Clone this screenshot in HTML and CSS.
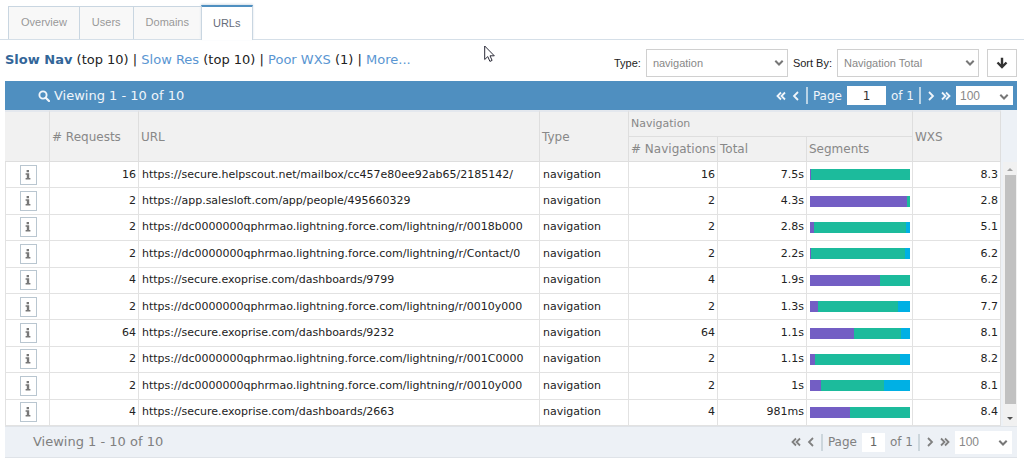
FILE: index.html
```html
<!DOCTYPE html>
<html lang="en">
<head>
<meta charset="utf-8">
<meta name="viewport" content="width=device-width, initial-scale=1">
<title>URLs</title>
<link rel="stylesheet" href="styles.css">
</head>
<body>
<svg class="sprite" aria-hidden="true">
  <symbol id="chevron-down" viewBox="0 0 10 8"><path d="M1.3 1.8 5 5.5l3.700-3.700" fill="none" stroke="currentColor" stroke-width="2"/></symbol>
  <symbol id="prev" viewBox="0 0 8 10"><path d="M6 1 2 5l4 4" fill="none" stroke="currentColor" stroke-width="1.800"/></symbol>
  <symbol id="next" viewBox="0 0 8 10"><path d="M2 1l4 4-4 4" fill="none" stroke="currentColor" stroke-width="1.800"/></symbol>
  <symbol id="first" viewBox="0 0 10 10"><path d="M5 1.500 1.500 5 5 8.500M9 1.500 5.500 5 9 8.500" fill="none" stroke="currentColor" stroke-width="1.800"/></symbol>
  <symbol id="last" viewBox="0 0 10 10"><path d="M1 1.500 4.500 5 1 8.500M5 1.500 8.500 5 5 8.500" fill="none" stroke="currentColor" stroke-width="1.800"/></symbol>
  <symbol id="info" viewBox="0 0 6 10"><path d="M1.600 0h2.400v2.200H1.600zM.6 3.200H4.200V7.900h1.200V9.500H.6V7.900h1.200V4.800H.6z" fill="currentColor"/></symbol>
</svg>

<nav class="tabs">
  <a class="tab" href="#overview">Overview</a>
  <a class="tab" href="#users">Users</a>
  <a class="tab" href="#domains">Domains</a>
  <a class="tab tab-active" href="#urls" aria-current="page">URLs</a>
</nav>

<main class="page">
  <div class="toolbar">
    <div class="views"><a class="current" href="#slow-nav">Slow Nav</a> (top 10) | <a href="#slow-res">Slow Res</a> (top 10) | <a href="#poor-wxs">Poor WXS</a> (1) | <a href="#more">More...</a></div>
    <div class="filters">
      <label for="type">Type:</label>
      <span class="picker"><select id="type"><option>navigation</option></select><svg class="caret"><use href="#chevron-down"/></svg></span>
      <label for="sort">Sort By:</label>
      <span class="picker"><select id="sort"><option>Navigation Total</option></select><svg class="caret"><use href="#chevron-down"/></svg></span>
      <button class="direction" type="button" aria-label="Sort descending"><svg viewBox="0 0 12 12" width="12" height="12"><path d="M6 .8v9.400M1.500 5.500 6 10l4.500-4.500" fill="none" stroke="#333" stroke-width="2.400"/></svg></button>
    </div>
  </div>

  <section class="grid">
    <div class="bar bar-top">
      <svg class="search" viewBox="0 0 12 12"><circle cx="5" cy="5" r="3.600" fill="none" stroke="currentColor" stroke-width="1.900"/><path d="M7.700 7.700 11 11" stroke="currentColor" stroke-width="2.200" stroke-linecap="round"/></svg>
      <span class="count">Viewing 1 - 10 of 10</span>
      <div class="pager">
        <button type="button" aria-label="First page"><svg><use href="#first"/></svg></button>
        <button type="button" aria-label="Previous page"><svg><use href="#prev"/></svg></button>
        <i class="rule"></i>
        <label for="page-top">Page</label>
        <input id="page-top" type="text" value="1">
        <span>of 1</span>
        <i class="rule"></i>
        <button type="button" aria-label="Next page"><svg><use href="#next"/></svg></button>
        <button type="button" aria-label="Last page"><svg><use href="#last"/></svg></button>
        <span class="picker size"><select aria-label="Rows per page"><option>100</option></select><svg class="caret"><use href="#chevron-down"/></svg></span>
      </div>
    </div>

    <div class="content">
      <table class="data">
        <colgroup><col class="c-info"><col class="c-num"><col><col class="c-num"><col class="c-num"><col class="c-num"><col class="c-seg"><col class="c-wxs"></colgroup>
        <thead>
          <tr><th rowspan="2"></th><th rowspan="2"># Requests</th><th rowspan="2">URL</th><th rowspan="2">Type</th><th class="group" colspan="3">Navigation</th><th rowspan="2">WXS</th></tr>
          <tr><th># Navigations</th><th>Total</th><th>Segments</th></tr>
        </thead>
        <tbody id="rows"></tbody>
      </table>
      <div class="gutter" aria-hidden="true"><div class="track"><i class="up"></i><i class="thumb"></i><i class="down"></i></div></div>
    </div>

    <div class="bar bar-bottom">
      <span class="count">Viewing 1 - 10 of 10</span>
      <div class="pager">
        <button type="button" aria-label="First page"><svg><use href="#first"/></svg></button>
        <button type="button" aria-label="Previous page"><svg><use href="#prev"/></svg></button>
        <i class="rule"></i>
        <label for="page-bottom">Page</label>
        <input id="page-bottom" type="text" value="1">
        <span>of 1</span>
        <i class="rule"></i>
        <button type="button" aria-label="Next page"><svg><use href="#next"/></svg></button>
        <button type="button" aria-label="Last page"><svg><use href="#last"/></svg></button>
        <span class="picker size"><select aria-label="Rows per page"><option>100</option></select><svg class="caret"><use href="#chevron-down"/></svg></span>
      </div>
    </div>
  </section>
</main>
<svg class="pointer" viewBox="0 0 11 18" aria-hidden="true"><path d="M.7 1v13.500l3.100-2.900 2.100 4.800 2.200-1-2.100-4.600h4.300z" fill="#fff" stroke="#2b2b38" stroke-width="1"/></svg>
<script src="rows.js"></script>
</body>
</html>
```
FILE: styles.css
```css
* { box-sizing: border-box; }
body {
  margin: 0;
  background: #fff;
  color: #222;
  font: 12px/16px Verdana, "DejaVu Sans", sans-serif;
}
a { color: #5a96d2; text-decoration: none; }
button, input, select { font: inherit; color: inherit; margin: 0; border-radius: 0; }
.sprite { display: none; }

.tabs {
  display: flex;
  align-items: flex-end;
  height: 40px;
  padding-left: 8px;
  border-bottom: 1px solid #d5dfe8;
}
.tab {
  height: 33px;
  padding: 0 12px;
  border: 1px solid #c9d6e1;
  border-width: 1px 0 0 1px;
  background: #f8f8f8;
  color: #999;
  font: 11px/30px "Liberation Sans", Arial, sans-serif;
}
.tab-active {
  height: 35px;
  margin-bottom: -1px;
  padding: 0 11px;
  border-width: 2px 1px 0;
  border-top-color: #4f8fc0;
  background: #fff;
  color: #666c7a;
  line-height: 32px;
  box-shadow: 0 -1px 2px #d5dfe8;
}

.page { padding: 9px 7px 0 5px; }
.toolbar { display: flex; justify-content: space-between; align-items: flex-start; height: 32px; }
.views { padding-top: 3px; font-size: 13px; white-space: nowrap; }
.views .current { color: #336699; font-weight: bold; }
.filters { display: flex; align-items: center; gap: 5px; font: 11px/16px "Liberation Sans", Arial, sans-serif; }
.picker { position: relative; display: flex; color: #888; }
.picker select {
  appearance: none;
  width: 142px;
  height: 28px;
  padding: 0 20px 0 6px;
  border: 1px solid #d0d0d0;
  background: #fff;
}
.caret { position: absolute; right: 4px; top: 50%; width: 10px; height: 8px; margin-top: -4px; color: #777; pointer-events: none; }
.direction { display: grid; place-items: center; width: 30px; height: 28px; margin-left: 3px; padding: 0; border: 1px solid #d0d0d0; background: #fff; }

.bar { display: flex; align-items: center; }
.bar-top { height: 29px; padding: 0 4px 0 33px; background: #4f8fc0; color: #f0f5fa; }
.count { font-size: 13px; }
.search { width: 12px; height: 12px; margin-right: 4px; }
.bar-bottom { height: 32px; padding: 0 5px 0 28px; border: 1px solid #dfe3e8; border-width: 1px 0; background: #edf1f6; color: #808080; }
.pager { display: flex; align-items: center; gap: 5px; margin-left: auto; }
.pager button { display: flex; padding: 0; border: 0; background: none; }
.pager svg { width: 10px; height: 10px; }
.rule { width: 2px; height: 17px; background: #b9d3e6; }
.pager input { width: 39px; height: 19px; padding: 0; border: 0; background: #fff; color: #333; text-align: center; }
.bar-bottom .rule { background: #ccd6dc; }
.bar-bottom input { width: 23px; color: #666; }
.size select { width: 57px; height: 19px; padding-left: 4px; border: 0; font: 12px/16px "Liberation Sans", Arial, sans-serif; }
.bar-bottom .size select { height: 23px; }

.content { display: flex; }
.data { flex: 1; min-width: 0; width: 0; height: 316px; table-layout: fixed; border-collapse: separate; border-spacing: 0; }
.c-info { width: 45px; }
.c-num { width: 89px; }
.c-seg { width: 106px; }
.c-wxs { width: 88px; }
.data th {
  height: 25px;
  padding: 0 0 0 2px;
  border: 1px solid #dedede;
  border-width: 0 1px 1px 0;
  background: #f1f1f1;
  color: #888;
  font-weight: normal;
  text-align: left;
  white-space: nowrap;
}
.data th.group { height: 27px; font-size: 11px; border-top: 2px solid #e4e8ee; }
.data th[rowspan] { border-top: 2px solid #e4e8ee; }
.data td {
  padding: 0 2px 0 3px;
  border: 1px solid #e2e2e2;
  border-width: 0 1px 1px 0;
  font-size: 11px;
  line-height: 16px;
  overflow: hidden;
  white-space: nowrap;
}
.data td:first-child { border-left-width: 1px; }
.data td.num { text-align: right; }
.data td.url { padding-right: 0; }
.info { display: grid; place-items: center; width: 17px; height: 20px; margin: 0 auto; padding: 0; border: 1px solid #b9c6d0; background: #fff; color: #777; }
.info svg { width: 6px; height: 10px; }
.segments { display: flex; height: 11px; background: #1cbb9c; }
.segments .wait { background: #735ec4; }
.segments .load { margin-left: auto; background: #00b0e4; }

.gutter { display: flex; width: 16px; padding-top: 52px; background: #edf1f6; }
.track { flex: 1; display: flex; flex-direction: column; align-items: center; gap: 4px; padding: 6px 0; margin-left: 2px; background: #f1f1f1; }
.thumb { flex: 1; width: 11px; background: #c1c1c1; }
.up, .down { border: 3px solid transparent; }
.up { border-top: 0; border-bottom-color: #a3a3a3; }
.down { margin-top: 9px; border-bottom: 0; border-top-color: #505050; }

.pointer { position: absolute; left: 484px; top: 45px; width: 11px; height: 18px; }
```
FILE: rows.js
```js
const org = 'https://dc0000000qphrmao.lightning.force.com/lightning/r/';
// requests, URL, navigations, total, first segment %, last segment %, WXS
const rows = [
  [16, 'https://secure.helpscout.net/mailbox/cc457e80ee92ab65/2185142/', 16, '7.5s', 1, 0, '8.3'],
  [2, 'https://app.salesloft.com/app/people/495660329', 2, '4.3s', 97, 0, '2.8'],
  [2, org + '0018b000', 2, '2.8s', 4, 4, '5.1'],
  [2, org + 'Contact/0', 2, '2.2s', 1, 5, '6.2'],
  [4, 'https://secure.exoprise.com/dashboards/9799', 4, '1.9s', 70, 0, '6.2'],
  [2, org + '0010y000', 2, '1.3s', 8, 12, '7.7'],
  [64, 'https://secure.exoprise.com/dashboards/9232', 64, '1.1s', 44, 9, '8.1'],
  [2, org + '001C0000', 2, '1.1s', 5, 10, '8.2'],
  [2, org + '0010y000', 2, '1s', 11, 26, '8.1'],
  [4, 'https://secure.exoprise.com/dashboards/2663', 4, '981ms', 40, 0, '8.4']
];

document.getElementById('rows').innerHTML = rows.map(([requests, url, navs, total, wait, load, wxs]) => `
  <tr>
    <td><button class="info" type="button" aria-label="Details"><svg><use href="#info"/></svg></button></td>
    <td class="num">${requests}</td>
    <td class="url">${url}</td>
    <td>navigation</td>
    <td class="num">${navs}</td>
    <td class="num">${total}</td>
    <td><div class="segments"><span class="wait" style="width:${wait}%"></span><span class="load" style="width:${load}%"></span></div></td>
    <td class="num">${wxs}</td>
  </tr>`).join('');
```
